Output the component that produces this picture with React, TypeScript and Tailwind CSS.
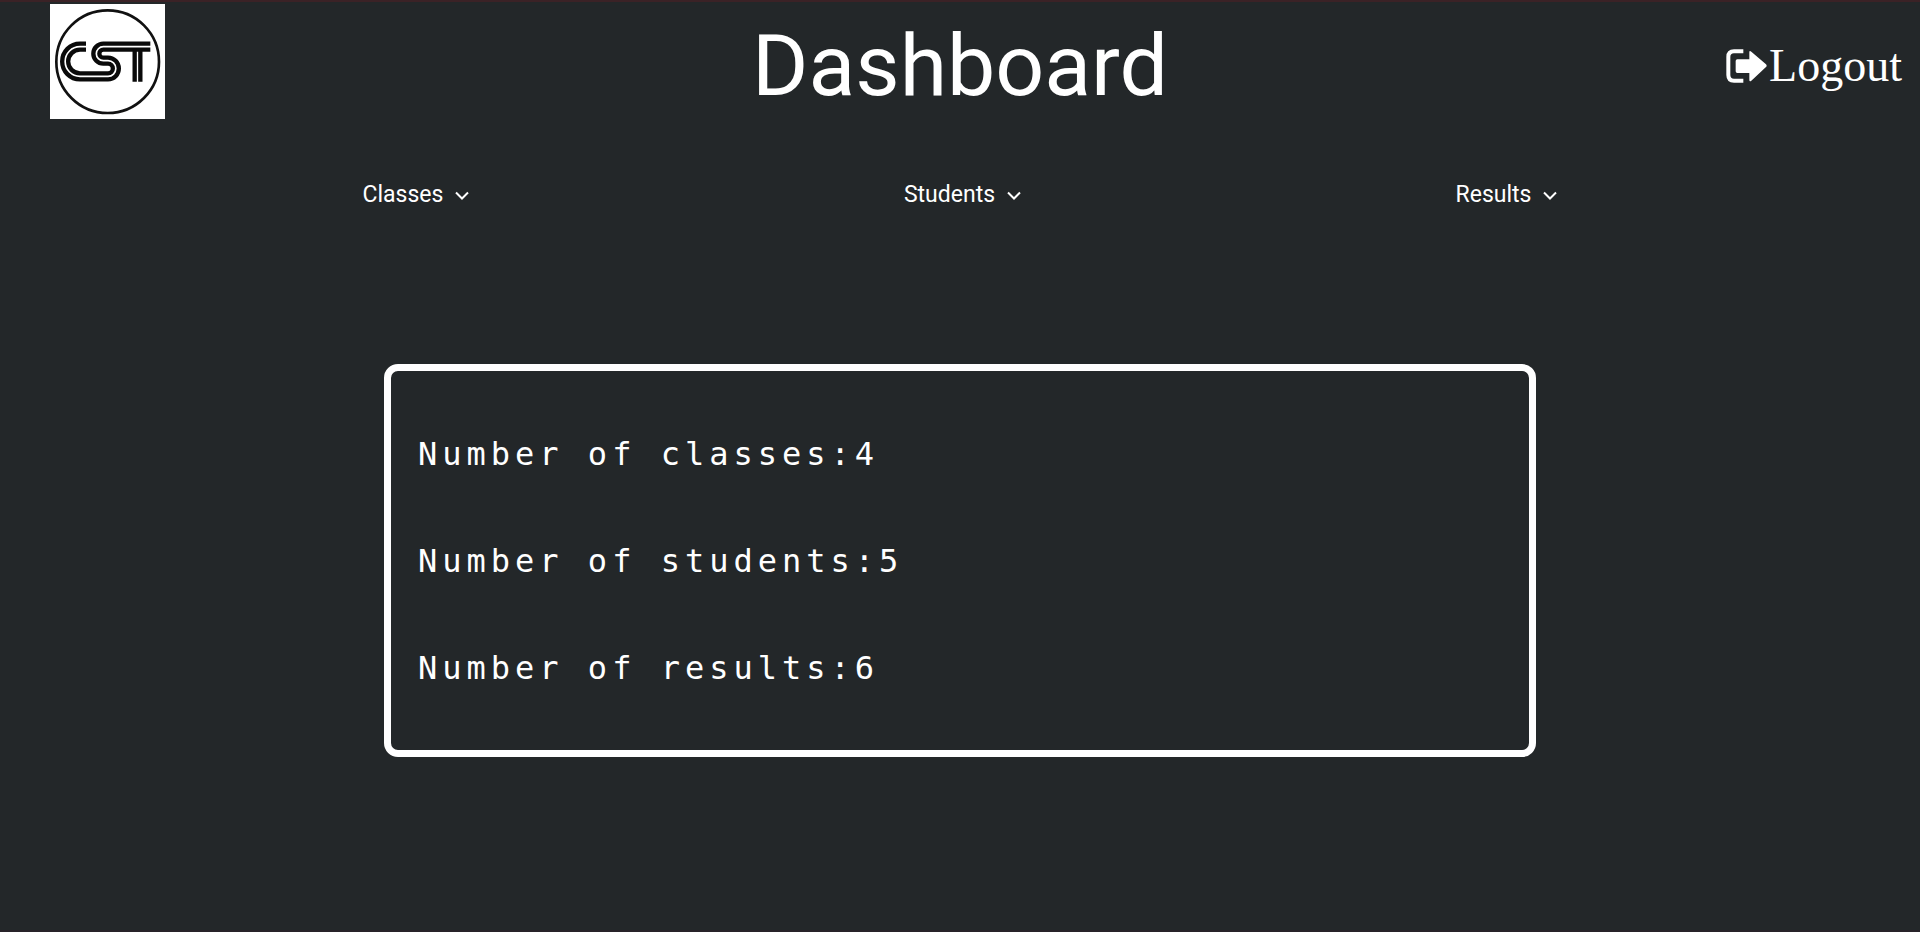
import React from "react";

const menus = ["Classes", "Students", "Results"];

const stats = [
  { label: "Number of classes", value: 4 },
  { label: "Number of students", value: 5 },
  { label: "Number of results", value: 6 },
];

function Logo() {
  return (
    <svg viewBox="0 0 345 345" className="ml-[50px] size-[115px] bg-white" role="img" aria-label="CST">
      <circle cx="173" cy="173" r="154" fill="none" stroke="#111" strokeWidth="8" />
      <g transform="translate(-30 -12)" fill="none" stroke="#0a0a0a" strokeWidth="13">
        <path d="M138 131H120a53.5 53.5 0 0 0 0 107H204a32.5 32.5 0 0 0 0-65H190a12 12 0 0 1 0-24H331" />
        <path d="M138 149H120a35.5 35.5 0 0 0 0 71H204a14.5 14.5 0 0 0 0-29H190a30 30 0 0 1 0-60H331" />
        <path d="M284 149v96M301 149v96" />
      </g>
    </svg>
  );
}

function LogoutIcon() {
  return (
    <svg viewBox="0 0 123 102" className="h-[34px] w-[41px]" aria-hidden="true">
      <path d="M52 7H24Q7 7 7 24V78Q7 95 24 95H52" fill="none" stroke="currentColor" strokeWidth="12" />
      <path
        d="M34 31H70V10Q70 3 76 8L120 46Q124 50 120 54L76 95Q70 100 70 92V72H34Q29 72 29 67V36Q29 31 34 31Z"
        fill="currentColor"
      />
    </svg>
  );
}

function Chevron() {
  return (
    <svg viewBox="0 0 14 10" className="mt-[2px] h-[10px] w-[14px]" fill="none" stroke="currentColor" strokeWidth="2" aria-hidden="true">
      <path d="M1 1.5 7 7.5 13 1.5" />
    </svg>
  );
}

export default function App() {
  return (
    <div className="min-h-screen border-t-2 border-b-2 border-t-[#3b2226] border-b-[#282329] bg-[#232729] font-['Roboto',sans-serif] text-white">
      <header className="grid grid-cols-[1fr_auto_1fr] items-center pt-[2px]">
        <Logo />
        <h1 className="pt-2 text-[86px] leading-[107px]">Dashboard</h1>
        <a
          href="#logout"
          className="mr-[18px] flex items-center gap-[2px] justify-self-end pt-2 font-['Liberation_Serif',serif] text-[46px] leading-[56px]"
        >
          <LogoutIcon />
          Logout
        </a>
      </header>

      <nav className="mt-[56px] flex justify-evenly">
        {menus.map((name) => (
          <button key={name} type="button" className="flex items-center gap-3 px-[72px] text-[23px] leading-[40px]">
            {name}
            <Chevron />
          </button>
        ))}
      </nav>

      <main className="mx-auto mt-[149px] flex w-3/5 flex-col gap-[67px] rounded-[14px] border-[7px] border-white px-[27px] pt-[63px] pb-[62px] font-['DejaVu_Sans_Mono',monospace] text-[32px] leading-[40px] tracking-[5px]">
        {stats.map(({ label, value }) => (
          <p key={label}>
            {label}:{value}
          </p>
        ))}
      </main>
    </div>
  );
}
